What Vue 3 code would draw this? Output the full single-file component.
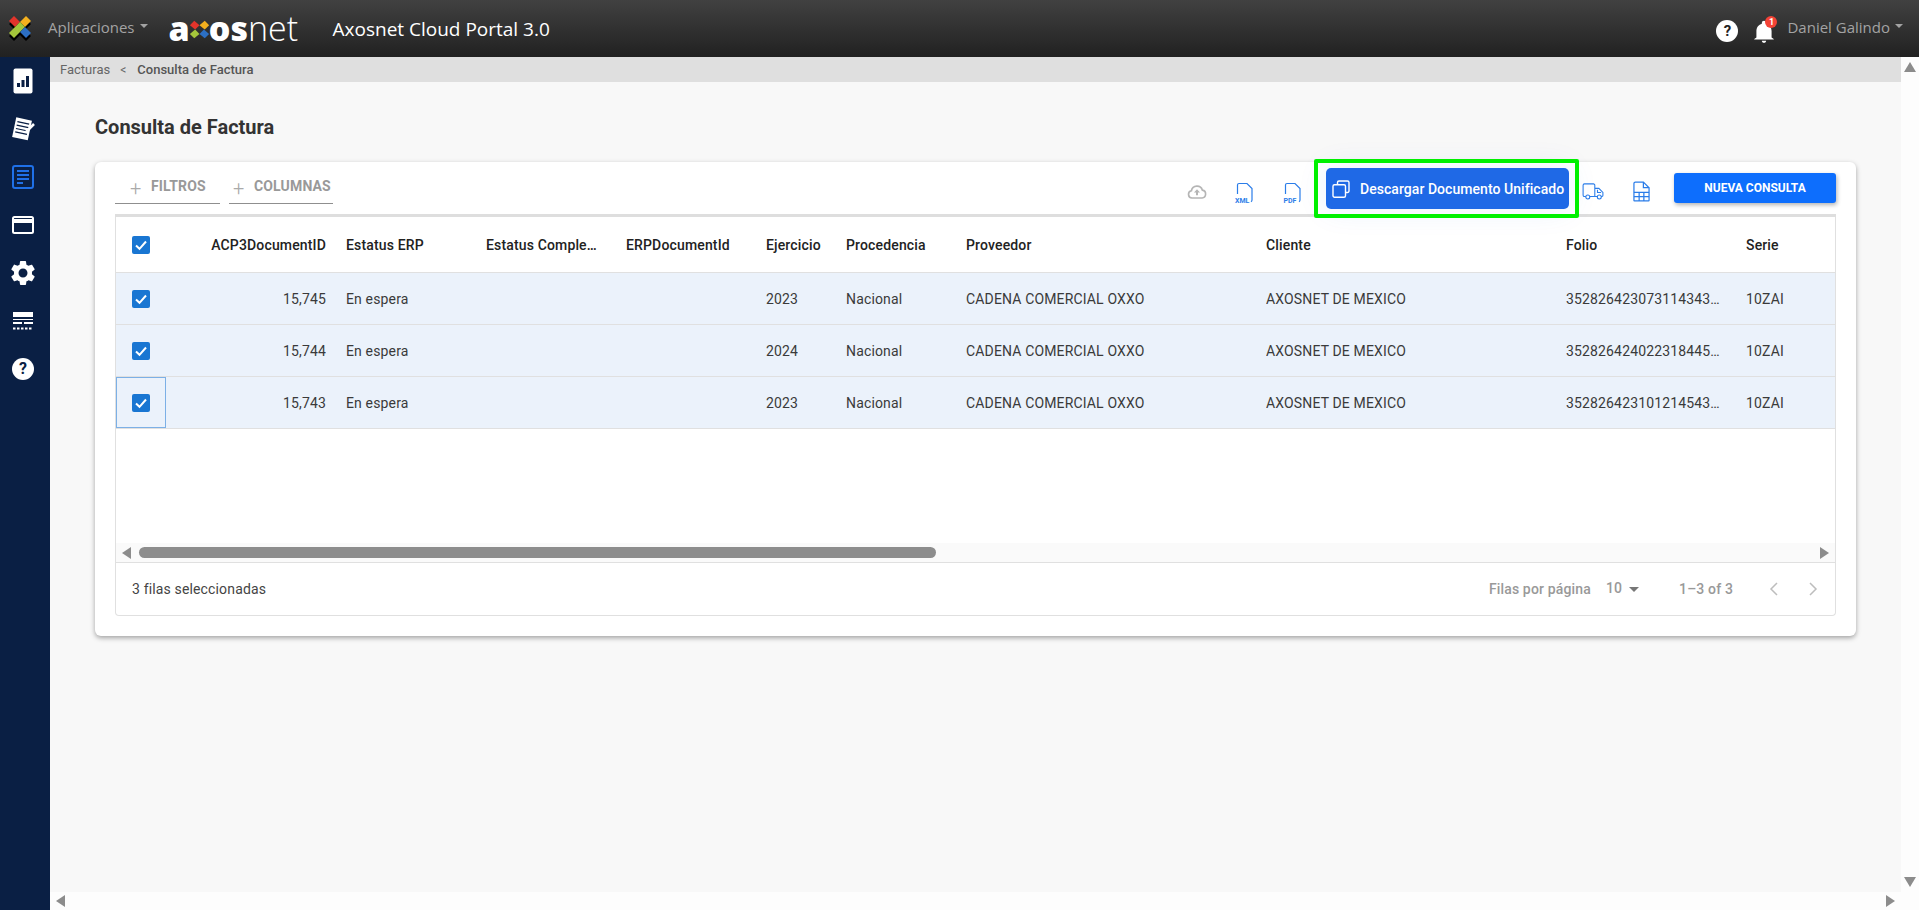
<script setup>
const columns = [
  { label: 'ACP3DocumentID', key: 'id', right: true },
  { label: 'Estatus ERP', key: 'status' },
  { label: 'Estatus Complemento', key: 'comp' },
  { label: 'ERPDocumentId', key: 'erp' },
  { label: 'Ejercicio', key: 'year' },
  { label: 'Procedencia', key: 'origin' },
  { label: 'Proveedor', key: 'vendor' },
  { label: 'Cliente', key: 'client' },
  { label: 'Folio', key: 'folio' },
  { label: 'Serie', key: 'serie' }
]
const base = { status: 'En espera', comp: '', erp: '', origin: 'Nacional', vendor: 'CADENA COMERCIAL OXXO', client: 'AXOSNET DE MEXICO', serie: '10ZAI' }
const rows = [
  { ...base, id: '15,745', year: '2023', folio: '3528264230731143430000' },
  { ...base, id: '15,744', year: '2024', folio: '3528264240223184450000' },
  { ...base, id: '15,743', year: '2023', folio: '3528264231012145430000' }
]
</script>

<template>
  <div class="app">
    <header class="topbar">
      <svg class="mark" viewBox="0 0 24 27" width="24" height="27">
        <path d="M1 6 6 1l6 6 6-6 5 5-6 6 6 6-5 5-6-6-6 6-5-5 6-6z" fill="#000" transform="translate(0 3)" />
        <path d="M1 6 6 1l6 6-5 5z" fill="#e3342b" />
        <path d="M12 7l6-6 5 5-6 6z" fill="#f4b01e" />
        <path d="M1 18l11-11 5 5-11 11z" fill="#a5c63b" />
        <path d="M12 17l5-5 6 6-5 5z" fill="#2c6fc4" />
      </svg>
      <span class="apps">Aplicaciones</span>
      <span class="caret"></span>
      <div class="brand">
        <span class="brand-bold">a</span>
        <svg viewBox="0 0 24 24" width="21" height="21" class="brand-mark">
          <path d="M1 7 6 2l6 5-5 5z" fill="#e3342b" />
          <path d="M12 7l6-5 5 5-5 5z" fill="#f4b01e" />
          <path d="M1 17l6-5 5 5-6 5z" fill="#a5c63b" />
          <path d="M12 17l5-5 6 5-5 5z" fill="#2c6fc4" />
        </svg>
        <span class="brand-bold">os</span><span class="brand-light">net</span>
      </div>
      <span class="portal">Axosnet Cloud Portal 3.0</span>
      <div class="top-right">
        <span class="help">?</span>
        <span class="bell">
          <svg viewBox="0 0 24 24" width="26" height="26">
            <path fill="#fff" d="M12 22c1.100 0 2-.9 2-2h-4c0 1.100.9 2 2 2zm7-5v-6c0-3.400-2.200-6-5-6.700V3.500a2 2 0 0 0-4 0v.8C7.200 5 5 7.600 5 11v6l-2 1.500V19h18v-.5z" />
          </svg>
          <span class="badge">1</span>
        </span>
        <span class="user">Daniel Galindo</span>
        <span class="caret"></span>
      </div>
    </header>

    <div class="body">
      <aside class="sidebar">
        <div class="side-item">
          <svg viewBox="0 0 20 26" width="20" height="26">
            <rect x="0.500" y="0.500" width="19" height="25" rx="2" fill="#fff" />
            <rect x="4" y="15" width="3" height="4" fill="#0a1f44" />
            <rect x="8.500" y="12" width="3" height="7" fill="#0a1f44" />
            <rect x="13" y="8" width="3" height="11" fill="#0a1f44" />
          </svg>
        </div>
        <div class="side-item">
          <svg viewBox="0 0 24 24" width="24" height="24">
            <g transform="rotate(12 12 12)">
              <rect x="3" y="2" width="16" height="20" fill="#fff" />
              <path d="M5 6h12M5 9.500h12M5 13h12M5 16.500h12" stroke="#0a1f44" stroke-width="1.200" />
            </g>
            <path d="M15 15 23 7" stroke="#fff" stroke-width="2.500" />
          </svg>
        </div>
        <div class="side-item">
          <svg viewBox="0 0 22 24" width="22" height="24">
            <rect x="1" y="1" width="20" height="22" rx="2" fill="none" stroke="#1f70e8" stroke-width="2" />
            <path d="M5 6h12M5 10h12M5 14h12M5 18h6" stroke="#1f70e8" stroke-width="1.800" />
          </svg>
        </div>
        <div class="side-item">
          <svg viewBox="0 0 22 18" width="22" height="18">
            <rect x="1" y="1" width="20" height="16" rx="1.500" fill="none" stroke="#fff" stroke-width="2" />
            <rect x="1" y="3" width="20" height="4" fill="#fff" />
          </svg>
        </div>
        <div class="side-item">
          <svg viewBox="0 0 24 24" width="30" height="30">
            <path fill="#fff" d="M19.140 12.940c.04-.3.06-.61.06-.94 0-.32-.02-.64-.07-.94l2.030-1.580c.18-.14.23-.41.12-.61l-1.920-3.320c-.12-.22-.37-.29-.59-.22l-2.390.96c-.5-.38-1.030-.7-1.620-.94l-.36-2.540c-.04-.24-.24-.41-.48-.41h-3.840c-.24 0-.43.17-.47.41l-.36 2.540c-.59.24-1.130.57-1.620.94l-2.390-.96c-.22-.08-.47 0-.59.22L2.740 8.870c-.12.21-.08.47.12.61l2.030 1.580c-.05.3-.09.63-.09.94s.02.64.07.94l-2.030 1.580c-.18.14-.23.41-.12.61l1.920 3.320c.12.22.37.29.59.22l2.390-.96c.5.38 1.030.7 1.620.94l.36 2.540c.05.24.24.41.48.41h3.840c.24 0 .44-.17.47-.41l.36-2.540c.59-.24 1.130-.56 1.620-.94l2.390.96c.22.08.47 0 .59-.22l1.920-3.320c.12-.22.07-.47-.12-.61l-2.010-1.580zM12 15.600c-1.980 0-3.600-1.620-3.600-3.600s1.620-3.600 3.600-3.600 3.600 1.620 3.600 3.600-1.620 3.600-3.600 3.600z" />
          </svg>
        </div>
        <div class="side-item">
          <svg viewBox="0 0 20 18" width="20" height="18">
            <rect x="0" y="0" width="20" height="5" fill="#fff" />
            <path d="M0 7.500h20" stroke="#fff" stroke-width="1" />
            <path d="M0 11h9M11 11h9" stroke="#fff" stroke-width="2" />
            <path d="M0 16.500h20" stroke="#fff" stroke-width="2" stroke-dasharray="2.500 1.500" />
          </svg>
        </div>
        <div class="side-item">
          <span class="side-help">?</span>
        </div>
      </aside>

      <div class="viewport">
        <div class="viewport-top">
          <main class="page">
            <nav class="crumbs">
              <span>Facturas</span>
              <span class="crumb-sep">&lt;</span>
              <span class="crumb-current">Consulta de Factura</span>
            </nav>
            <h1 class="title">Consulta de Factura</h1>
            <section class="card">
              <div class="toolbar">
                <div class="tool-left">
                  <button class="tab tab-filter"><span class="plus">+</span>FILTROS</button>
                  <button class="tab tab-cols"><span class="plus">+</span>COLUMNAS</button>
                </div>
                <div class="tool-right">
                  <span class="tool-icon">
                    <svg viewBox="0 0 24 24" width="22" height="22">
                      <path fill="none" stroke="#b5b5b5" stroke-width="1.800" d="M6.500 18.500a4 4 0 0 1-.6-7.900 6.200 6.200 0 0 1 12-.6 4.300 4.300 0 0 1-.4 8.500z" />
                      <path fill="#b5b5b5" d="M12 9l3.300 3.600h-2.200v3h-2.200v-3H8.700z" />
                    </svg>
                  </span>
                  <span class="tool-icon">
                    <svg viewBox="0 0 24 26" width="24" height="26">
                      <path fill="none" stroke="#2b7de9" stroke-width="1.200" d="M4.500 15V6A1.500 1.500 0 0 1 6 4.500h8l5 5V21a2 2 0 0 1-1 1.700" />
                      <text x="2" y="23.500" class="file-text">XML</text>
                    </svg>
                  </span>
                  <span class="tool-icon">
                    <svg viewBox="0 0 24 26" width="24" height="26">
                      <path fill="none" stroke="#2b7de9" stroke-width="1.200" d="M4.500 15V6A1.500 1.500 0 0 1 6 4.500h8l5 5V21a2 2 0 0 1-1 1.700" />
                      <text x="2.500" y="23.500" class="file-text">PDF</text>
                    </svg>
                  </span>
                  <div class="primary-wrap">
                    <button class="primary">
                      <svg viewBox="0 0 18 18" width="18" height="18">
                        <path fill="none" stroke="#fff" stroke-width="1.400" d="M5.500 4.500V2.500A1.500 1.500 0 0 1 7 1h8.500A1.500 1.500 0 0 1 17 2.500V11a1.500 1.500 0 0 1-1.500 1.500h-2" />
                        <rect x="1" y="4.700" width="12.500" height="12.500" rx="1.500" fill="none" stroke="#fff" stroke-width="1.400" />
                      </svg>
                      Descargar Documento Unificado
                    </button>
                    <span class="highlight"></span>
                  </div>
                  <span class="tool-icon">
                    <svg viewBox="0 0 24 20" width="22" height="18">
                      <path fill="none" stroke="#2b7de9" stroke-width="1.200" d="M4 15H2.500A1.500 1.500 0 0 1 1 13.500v-11A1.500 1.500 0 0 1 2.500 1h10A1.500 1.500 0 0 1 14 2.500V15H8.500M14 6h4.500l4.500 4.500V14a1 1 0 0 1-1 1h-1M17 15h-3" />
                      <circle cx="6.200" cy="15.500" r="2.200" fill="none" stroke="#2b7de9" stroke-width="1.200" />
                      <circle cx="19" cy="15.500" r="2.200" fill="none" stroke="#2b7de9" stroke-width="1.200" />
                      <path fill="none" stroke="#2b7de9" stroke-width="1.200" d="M17 7.500v3h4" />
                    </svg>
                  </span>
                  <span class="tool-icon">
                    <svg viewBox="0 0 18 22" width="17" height="21">
                      <path fill="none" stroke="#2b7de9" stroke-width="1.300" d="M1 11V2.500A1.500 1.500 0 0 1 2.500 1H11l6 6v13.500a.5.500 0 0 1-.5.500h-15a.5.500 0 0 1-.5-.5z" />
                      <path fill="none" stroke="#2b7de9" stroke-width="1.300" d="M11 1v6h6" />
                      <path fill="none" stroke="#2b7de9" stroke-width="1.300" d="M1 12h16M1 16.500h16M6.500 12v9M11.500 12v9" />
                    </svg>
                  </span>
                  <button class="new-query">NUEVA CONSULTA</button>
                </div>
              </div>

              <div class="grid">
                <div class="grid-scroller">
                  <div class="grid-row grid-head">
                    <div class="cell cell-check">
                      <span class="check">
                        <svg viewBox="0 0 18 18" width="18" height="18"><path d="M4 9.500l3.500 3.300L14 5.500" fill="none" stroke="#fff" stroke-width="2" /></svg>
                      </span>
                    </div>
                    <div v-for="c in columns" :key="c.key" class="cell" :class="{ 'cell-right': c.right }"><span class="clip">{{ c.label }}</span></div>
                  </div>
                  <div v-for="(r, i) in rows" :key="r.id" class="grid-row grid-data">
                    <div class="cell cell-check" :class="{ 'cell-focus': i === 2 }">
                      <span class="check">
                        <svg viewBox="0 0 18 18" width="18" height="18"><path d="M4 9.500l3.500 3.300L14 5.500" fill="none" stroke="#fff" stroke-width="2" /></svg>
                      </span>
                    </div>
                    <div v-for="c in columns" :key="c.key" class="cell" :class="{ 'cell-right': c.right }"><span class="clip">{{ r[c.key] }}</span></div>
                  </div>
                </div>
                <div class="grid-hbar">
                  <span class="arrow arrow-left"></span>
                  <span class="thumb"></span>
                  <span class="arrow arrow-right"></span>
                </div>
                <div class="grid-foot">
                  <span class="selected">3 filas seleccionadas</span>
                  <div class="pager">
                    <span class="pager-label">Filas por página</span>
                    <span class="pager-size">10</span>
                    <span class="pager-caret"></span>
                    <span class="pager-range">1–3 of 3</span>
                    <svg class="pager-nav" viewBox="0 0 24 24" width="24" height="24"><path d="M15 6l-6 6 6 6" fill="none" stroke="#bdbdbd" stroke-width="1.500" /></svg>
                    <svg class="pager-nav next" viewBox="0 0 24 24" width="24" height="24"><path d="M9 6l6 6-6 6" fill="none" stroke="#bdbdbd" stroke-width="1.500" /></svg>
                  </div>
                </div>
              </div>
            </section>
          </main>
          <div class="vbar">
            <span class="arrow arrow-up"></span>
            <span class="arrow arrow-down"></span>
          </div>
        </div>
        <div class="hbar">
          <span class="arrow arrow-left"></span>
          <span class="arrow arrow-right"></span>
        </div>
      </div>
    </div>
  </div>
</template>

<style>
html, body { margin: 0; padding: 0; overflow: hidden; }
</style>

<style scoped>
.app {
  height: 100vh;
  display: flex;
  flex-direction: column;
  overflow: hidden;
  font-family: Roboto, "Liberation Sans", sans-serif;
  font-size: 14px;
  color: #333;
}

.topbar {
  height: 57px;
  flex: none;
  display: flex;
  align-items: center;
  background: linear-gradient(#414141, #212121);
  padding-left: 8px;
  padding-right: 16px;
  box-sizing: border-box;
  font-family: "Open Sans", "Liberation Sans", sans-serif;
}
.mark { flex: none; margin-top: -1px; }
.apps { margin-left: 16px; color: #a3a3a3; font-size: 15px; margin-top: -3px; }
.caret {
  width: 0;
  height: 0;
  border-left: 4px solid transparent;
  border-right: 4px solid transparent;
  border-top: 4px solid #a3a3a3;
  margin-left: 5px;
  margin-top: -5px;
}
.brand {
  margin-left: 21px;
  display: flex;
  align-items: center;
  color: #fff;
  font-size: 34px;
  line-height: 40px;
  width: 130px;
  margin-top: -2px;
  font-family: "Open Sans", "Liberation Sans", sans-serif;
}
.brand-bold { font-weight: 800; }
.brand-light { font-weight: 300; }
.brand-mark { margin: 3px -1px 0; flex: none; }
.portal { margin-left: 34px; color: #fff; font-size: 19px; }
.top-right { margin-left: auto; display: flex; align-items: center; }
.help {
  width: 22px;
  height: 22px;
  border-radius: 50%;
  background: #fff;
  color: #222;
  font: 700 15px/22px Roboto, sans-serif;
  text-align: center;
  margin-top: 5px;
}
.bell { position: relative; margin-left: 13px; margin-top: 7px; height: 26px; display: block; }
.badge {
  position: absolute;
  top: -3px;
  right: 0;
  width: 12px;
  height: 12px;
  border-radius: 50%;
  background: #f44336;
  color: #fff;
  font: 700 9px/12px Roboto, sans-serif;
  text-align: center;
}
.user { margin-left: 10px; color: #a3a3a3; font-size: 15px; margin-top: -3px; }

.body { flex: 1; min-height: 0; display: flex; }
.sidebar { width: 50px; flex: none; background: #0a1f44; display: flex; flex-direction: column; }
.side-item { height: 48px; width: 46px; display: flex; align-items: center; justify-content: center; flex: none; }
.side-help {
  width: 22px;
  height: 22px;
  border-radius: 50%;
  background: #fff;
  color: #0a1f44;
  font: 700 16px/22px Roboto, sans-serif;
  text-align: center;
}

.viewport { flex: 1; min-width: 0; display: flex; flex-direction: column; background: #fdfdfd; }
.viewport-top { flex: 1; min-height: 0; display: flex; }
.page { flex: 1; min-width: 0; background: #f8f8f8; }
.vbar {
  width: 18px;
  flex: none;
  display: flex;
  flex-direction: column;
  justify-content: space-between;
  align-items: center;
  padding: 5px 0;
  box-sizing: border-box;
}
.hbar {
  height: 18px;
  flex: none;
  display: flex;
  justify-content: space-between;
  align-items: center;
  padding: 0 24px 0 6px;
}
.arrow { width: 0; height: 0; display: block; }
.arrow-up { border-left: 6px solid transparent; border-right: 6px solid transparent; border-bottom: 10px solid #8c8c8c; }
.arrow-down { border-left: 6px solid transparent; border-right: 6px solid transparent; border-top: 10px solid #8c8c8c; }
.arrow-left { border-top: 6px solid transparent; border-bottom: 6px solid transparent; border-right: 9px solid #8c8c8c; }
.arrow-right { border-top: 6px solid transparent; border-bottom: 6px solid transparent; border-left: 9px solid #8c8c8c; }

.crumbs {
  height: 25px;
  background: #dfdfdf;
  display: flex;
  align-items: center;
  padding-left: 10px;
  font-size: 13px;
  color: #666;
}
.crumb-sep { margin: 0 11px 0 10px; font-size: 12px; }
.crumb-current { font-weight: 500; color: #555; }
.title {
  margin: 33px 0 23px 45px;
  font-size: 20px;
  line-height: 24px;
  font-weight: 700;
  color: #333;
}
.card {
  margin: 0 45px;
  background: #fff;
  border-radius: 6px;
  padding: 6px 20px 20px;
  box-shadow: 0 2px 5px rgba(0, 0, 0, 0.35);
}
.toolbar { display: flex; justify-content: space-between; height: 46px; box-sizing: border-box; }
.tool-left { display: flex; gap: 9px; margin-top: 5px; }
.tab {
  height: 31px;
  box-sizing: border-box;
  border: 0;
  border-bottom: 1px solid #8f8f8f;
  background: none;
  padding: 0 0 5px 15px;
  color: #999;
  font: 700 14px/24px Roboto, sans-serif;
  letter-spacing: 0.15px;
  display: flex;
  align-items: center;
}
.tab-filter { width: 105px; }
.tab-cols { width: 104px; padding-left: 4px; }
.plus { font-size: 20px; font-weight: 300; color: #aaa; width: 21px; text-align: left; margin-top: 5px; }
.tool-right { display: flex; align-items: flex-start; }
.tool-icon { width: 48px; height: 41px; margin-top: 3px; display: flex; align-items: center; justify-content: center; }
.file-text { font: 700 7px Roboto, sans-serif; fill: #2b7de9; }
.primary-wrap { position: relative; margin-left: 9px; z-index: 2; }
.primary {
  width: 243px;
  height: 41px;
  border: 0;
  border-radius: 5px;
  background: #1f69e6;
  color: #fff;
  font: 500 14px Roboto, sans-serif;
  letter-spacing: 0.05px;
  display: flex;
  align-items: center;
  padding: 0 0 0 6px;
  gap: 10px;
  white-space: nowrap;
  box-shadow: 0 0 30px rgba(31, 105, 230, 0.1);
}
.highlight {
  position: absolute;
  top: -9px;
  bottom: -9px;
  left: -12px;
  right: -10px;
  border: 4px solid #00f000;
  border-radius: 2px;
  pointer-events: none;
}
.new-query {
  margin-left: 9px;
  margin-top: 5px;
  width: 162px;
  height: 30px;
  border: 0;
  border-radius: 3px;
  background: #0d6efd;
  color: #fff;
  font: 700 12px Roboto, sans-serif;
  box-shadow: 1px 2px 4px rgba(0, 0, 0, 0.3);
}

.grid {
  border: 1px solid #e0e0e0;
  border-top: 0;
  border-radius: 0 0 4px 4px;
  box-shadow: 0 -3px 0 #dedede;
  height: 399px;
  margin-top: 3px;
  display: flex;
  flex-direction: column;
  box-sizing: border-box;
  overflow: hidden;
  letter-spacing: 0.15px;
}
.grid-scroller { flex: 1; min-height: 0; overflow: hidden; }
.grid-row {
  display: grid;
  grid-template-columns: 50px 170px 140px 140px 140px 80px 120px 300px 300px 180px 150px;
  width: 1870px;
  box-sizing: border-box;
  border-bottom: 1px solid #e0e0e0;
}
.grid-head { height: 56px; font-weight: 500; color: #222; }
.grid-data { height: 52px; background: #ebf2fb; color: #3a3a3a; }
.cell {
  display: flex;
  align-items: center;
  padding: 0 10px;
  min-width: 0;
  box-sizing: border-box;
}
.cell-right { justify-content: flex-end; }
.clip { overflow: hidden; text-overflow: ellipsis; white-space: nowrap; }
.cell-check { justify-content: center; padding: 0; }
.cell-focus { outline: 1px solid #7cb0e6; outline-offset: -1px; }
.check { width: 18px; height: 18px; border-radius: 2px; background: #1976d2; display: block; }
.check svg { display: block; }

.grid-hbar {
  height: 19px;
  flex: none;
  display: flex;
  align-items: center;
  background: #fafafa;
  padding: 0 6px;
  box-sizing: border-box;
}
.thumb { width: 797px; height: 11px; margin-left: 8px; background: #8d8d8d; border-radius: 6px; margin-right: auto; }
.grid-foot {
  height: 53px;
  flex: none;
  border-top: 1px solid #e0e0e0;
  box-sizing: border-box;
  display: flex;
  align-items: center;
  justify-content: space-between;
  padding: 0 10px 0 16px;
}
.selected { color: #444; }
.pager { display: flex; align-items: center; color: #999; font-weight: 500; }
.pager-size { margin-left: 15px; margin-top: -2px; }
.pager-caret {
  width: 0;
  height: 0;
  margin-left: 7px;
  border-left: 5px solid transparent;
  border-right: 5px solid transparent;
  border-top: 5px solid #777;
}
.pager-range { margin-left: 40px; }
.pager-nav { margin-left: 29px; }
.next { margin-left: 15px; }
</style>
